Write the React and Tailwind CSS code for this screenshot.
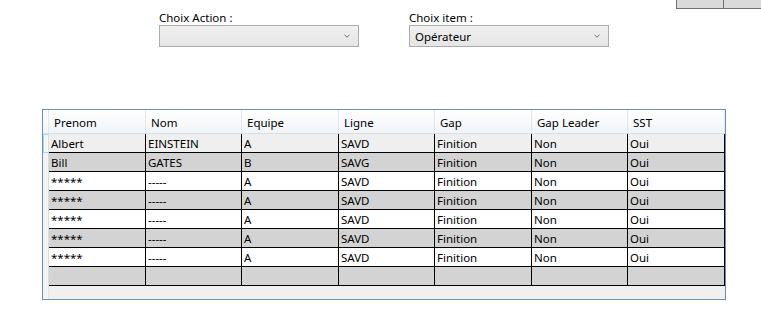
import React from "react";

const cols = [
  { name: "Prenom", w: "w-[97px]" },
  { name: "Nom", w: "w-[96px]" },
  { name: "Equipe", w: "w-[97px]" },
  { name: "Ligne", w: "w-[96px]" },
  { name: "Gap", w: "w-[97px]" },
  { name: "Gap Leader", w: "w-[96px]" },
  { name: "SST", w: "w-[97px]" },
];

const rows = [
  { bg: "bg-[#efefef]", cells: ["Albert", "EINSTEIN", "A", "SAVD", "Finition", "Non", "Oui"], current: true },
  { bg: "bg-[#d3d3d3]", cells: ["Bill", "GATES", "B", "SAVG", "Finition", "Non", "Oui"] },
  { bg: "bg-white", cells: ["*****", "-----", "A", "SAVD", "Finition", "Non", "Oui"] },
  { bg: "bg-[#d3d3d3]", cells: ["*****", "-----", "A", "SAVD", "Finition", "Non", "Oui"] },
  { bg: "bg-white", cells: ["*****", "-----", "A", "SAVD", "Finition", "Non", "Oui"] },
  { bg: "bg-[#d3d3d3]", cells: ["*****", "-----", "A", "SAVD", "Finition", "Non", "Oui"] },
  { bg: "bg-white", cells: ["*****", "-----", "A", "SAVD", "Finition", "Non", "Oui"] },
  { bg: "bg-[#d3d3d3]", cells: ["", "", "", "", "", "", ""] },
];

function Chevron() {
  return (
    <svg width="6" height="4" viewBox="0 0 6 4" className="shrink-0">
      <path d="M0.5 0.8 L3 3.2 L5.5 0.8" fill="none" stroke="#707070" strokeWidth="1" />
    </svg>
  );
}

function Combo({ label, value }) {
  return (
    <div className="flex flex-col w-[200px]">
      <div className="h-[16px] pt-[1px] text-[11.5px] leading-[16px] text-black">{label}</div>
      <div className="h-[22px] border border-[#acacac] bg-gradient-to-b from-[#f0f0f0] to-[#e5e5e5] flex items-center pl-[5px] pr-[8px]">
        <div className="flex-1 pt-[2px] text-[11.5px] leading-[16px] text-black">{value}</div>
        <Chevron />
      </div>
    </div>
  );
}

export default function App() {
  return (
    <div
      className="w-[761px] h-[310px] bg-white overflow-hidden flex flex-col"
      style={{ fontFamily: '"Segoe UI", "Noto Sans", sans-serif' }}
    >
      {/* top-right buttons */}
      <div className="h-[9px] flex items-end pl-[676px] shrink-0">
        <div className="h-[9px] w-[50px] bg-[#dadada] border-l border-b border-[#707070]" />
        <div className="h-[9px] w-[40px] bg-[#dadada] border-l border-b border-[#707070]" />
      </div>

      {/* combos */}
      <div className="flex pl-[159px] gap-[50px] shrink-0">
        <Combo label="Choix Action :" value="" />
        <Combo label="Choix item :" value="Opérateur" />
      </div>

      {/* grid */}
      <div className="mt-[62px] ml-[42px] w-[684px] h-[191px] border border-[#6f8fae] bg-[#f0f0f0] flex flex-col text-[11.5px] text-black">
        {/* header */}
        <div className="flex h-[24px] border-b border-[#d5dfe5] bg-gradient-to-b from-white to-[#f1f4f8] shrink-0">
          <div className="w-[6px] border-r border-[#e3e7ec] shrink-0" />
          {cols.map((c) => (
            <div
              key={c.name}
              className={`${c.w} shrink-0 border-r border-[#e3e7ec] pl-[5px] pt-[2px] flex items-center leading-[16px]`}
            >
              {c.name}
            </div>
          ))}
        </div>
        {/* rows */}
        {rows.map((r, i) => (
          <div key={i} className="flex h-[19px] shrink-0">
            <div
              className={`w-[6px] shrink-0 border-r border-[#d8dde3] ${
                r.current ? "bg-[#f3f8fc] border-l border-t border-b border-l-[#a8d4f5] border-t-[#a8d4f5] border-b-[#a8d4f5]" : "bg-[#f4f4f4]"
              }`}
            />
            {r.cells.map((v, j) => (
              <div
                key={j}
                className={`${cols[j].w} shrink-0 ${r.bg} border-r border-b border-black pl-[2px] pt-[2px] flex items-center leading-[16px] whitespace-nowrap overflow-hidden`}
              >
                {v}
              </div>
            ))}
          </div>
        ))}
        <div className="flex flex-1">
          <div className="w-[6px] shrink-0 border-r border-[#e6e6e6] bg-[#f4f4f4]" />
          <div className="flex-1 bg-[#f0f0f0]" />
        </div>
      </div>
    </div>
  );
}
